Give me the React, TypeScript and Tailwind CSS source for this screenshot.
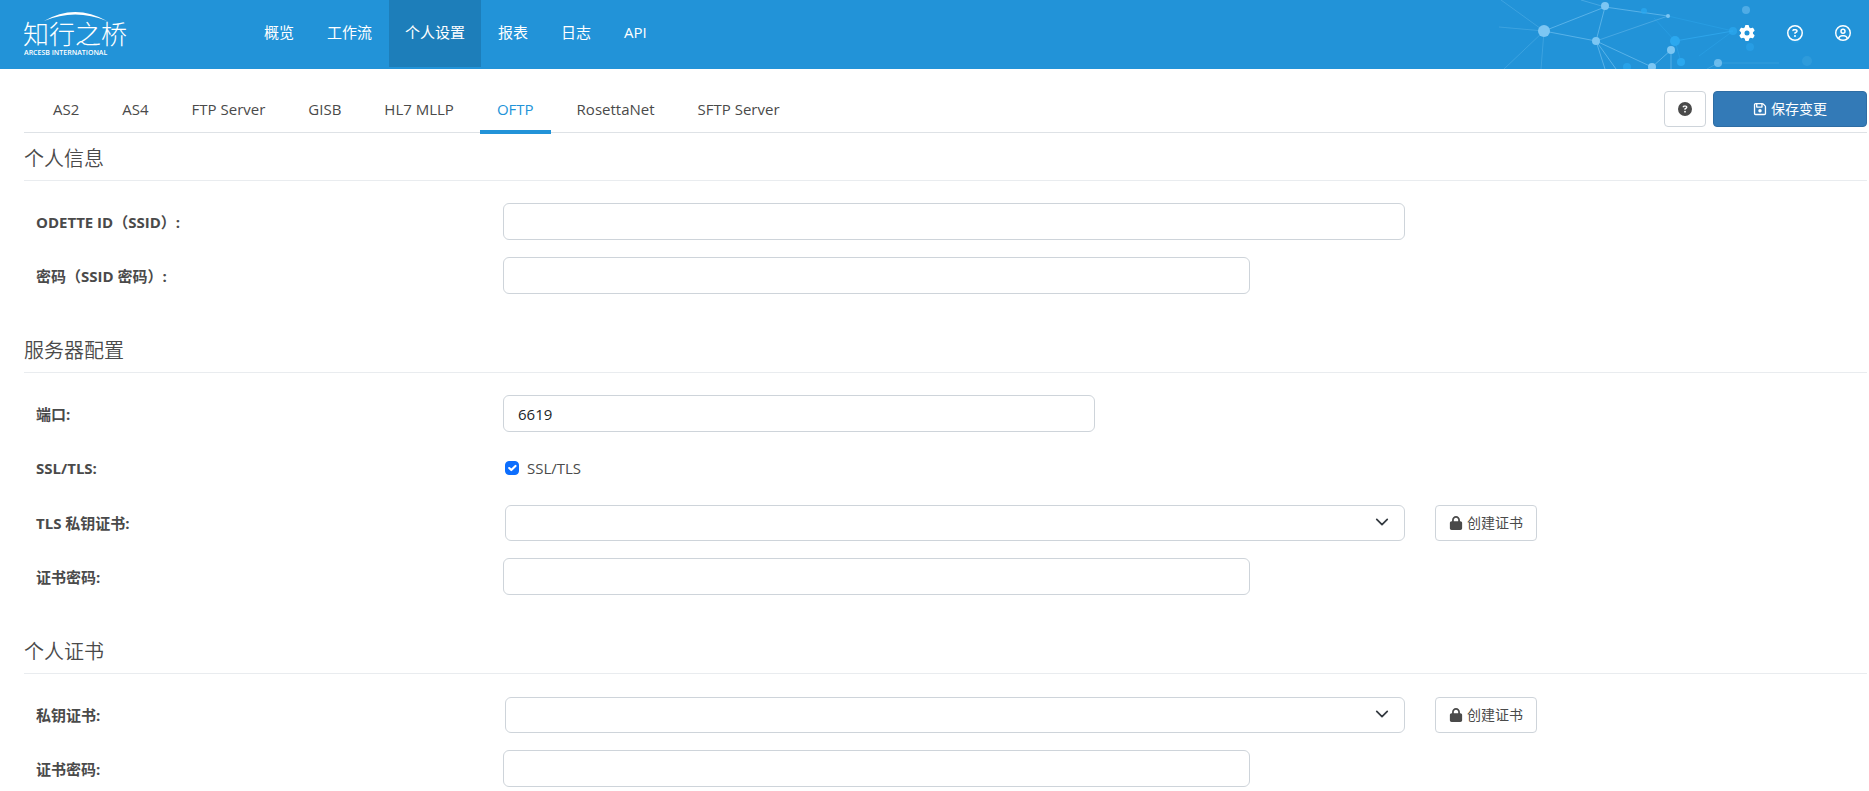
import { useId } from "react";
import type { ReactNode } from "react";
import {
  FaCircleQuestion,
  FaGear,
  FaLock,
  FaRegCircleQuestion,
  FaRegCircleUser,
  FaRegFloppyDisk,
} from "react-icons/fa6";

const navItems = ["概览", "工作流", "个人设置", "报表", "日志", "API"];
const tabs = ["AS2", "AS4", "FTP Server", "GISB", "HL7 MLLP", "OFTP", "RosettaNet", "SFTP Server"];

const control = "block rounded-md border border-[#ced4da] bg-white text-[15px] text-[#212529] outline-none focus:border-[#2293d8]";
const outlineButton =
  "flex h-9 items-center justify-center rounded-[4px] border border-[#ced4da] bg-white text-sm text-[#4a4a4a]";

function Logo() {
  return (
    <a href="#" aria-label="知行之桥" className="block w-[230px] shrink-0 pl-6 pt-3 text-white">
      <svg width="106" height="46" viewBox="0 0 106 46">
        <path d="M20 9 Q51 -9 83 9 Q51 -4 20 9 Z" fill="#fff" />
        <text x="-1" y="32" fontSize="26" fill="#fff" fontFamily="'Noto Sans CJK SC', sans-serif" fontWeight="300">
          知行之桥
        </text>
        <text x="0" y="43" fontSize="7" fill="#fff" fontFamily="'Open Sans', sans-serif" fontWeight="600">
          ARCESB INTERNATIONAL
        </text>
      </svg>
    </a>
  );
}

function Network() {
  return (
    <svg className="absolute right-0 top-0" width="420" height="69" viewBox="0 0 420 69" aria-hidden="true">
      <g stroke="#7cc6f3" strokeWidth="1" strokeOpacity="0.6" fill="none">
        <path d="M95 31L156 7L147 41L95 31M156 7L219 16M147 41L203 67L222 50V69M147 41L156 69M147 41L167 69" />
        <path d="M147 41L219 16M156 7L132 0" strokeOpacity="0.4" />
        <path d="M95 31L52 0M95 31L50 27M95 31L55 69M95 31L92 69M269 63L258 69" strokeOpacity="0.3" />
        <path d="M269 63H330" strokeOpacity="0.2" />
      </g>
      <path d="M226 41L284 31" stroke="#2fa9ef" strokeOpacity="0.8" fill="none" />
      <path d="M284 31L219 16M226 41L232 62M284 31L250 56M226 41L205 18" stroke="#2fa9ef" strokeOpacity="0.4" fill="none" />
      <g fill="#7cc6f3">
        <circle cx="95" cy="31" r="6" />
        <circle cx="156" cy="6" r="4" />
        <circle cx="147" cy="41" r="4" />
        <circle cx="219" cy="16" r="2" />
        <circle cx="222" cy="50" r="4" />
        <circle cx="203" cy="67" r="4" />
        <circle cx="269" cy="63" r="4" fillOpacity="0.8" />
        <circle cx="297" cy="10" r="4" fillOpacity="0.5" />
        <circle cx="358" cy="61" r="5" fillOpacity="0.15" />
      </g>
      <g fill="#2ba8ef">
        <circle cx="226" cy="41" r="5" />
        <circle cx="232" cy="62" r="4" />
        <circle cx="284" cy="31" r="4" fillOpacity="0.7" />
        <circle cx="195" cy="11" r="3" fillOpacity="0.8" />
        <circle cx="178" cy="67" r="4" fillOpacity="0.7" />
        <circle cx="301" cy="47" r="4" fillOpacity="0.5" />
        <circle cx="347" cy="39" r="4" fillOpacity="0.3" />
      </g>
    </svg>
  );
}

function Header() {
  return (
    <header className="relative flex h-[69px] items-start bg-[#2293d8]">
      <Network />
      <Logo />
      <nav className="ml-[18px] flex gap-px">
        {navItems.map((item) => (
          <a
            key={item}
            href="#"
            className={`flex h-[67px] items-center px-4 pb-[3px] text-[15px] text-white ${
              item === "API" ? "font-medium" : "font-normal"
            } ${item === "个人设置" ? "bg-[#1d7eba]" : ""}`}
          >
            {item}
          </a>
        ))}
      </nav>
      <div className="relative ml-auto flex h-[65px] items-center gap-8 pr-[18px] text-base text-white">
        <button type="button" aria-label="设置"><FaGear /></button>
        <button type="button" aria-label="帮助"><FaRegCircleQuestion /></button>
        <button type="button" aria-label="账户"><FaRegCircleUser /></button>
      </div>
    </header>
  );
}

function Section({ title, children }: { title: string; children: ReactNode }) {
  return (
    <section className="mb-[31px] last:mb-0">
      <h2 className="flex h-12 items-center border-b border-[#e9ecef] pt-[4px] text-xl font-[350]">{title}</h2>
      <div className="flex flex-col gap-[17px] pt-[22px]">{children}</div>
    </section>
  );
}

const row = "grid grid-cols-[479fr_902fr_462fr] items-center";
const label = "pl-3 text-[15px] font-bold leading-5";

function TextRow({ name, width, value, type = "text" }: { name: string; width: string; value?: string; type?: string }) {
  const id = useId();
  return (
    <div className={row}>
      <label htmlFor={id} className={label}>{name}</label>
      <input id={id} type={type} defaultValue={value} className={`${control} h-[37px] px-[14px] ${width}`} />
    </div>
  );
}

function CertRow({ name }: { name: string }) {
  const id = useId();
  return (
    <div className={`${row} h-[37px]`}>
      <label htmlFor={id} className={label}>{name}</label>
      <div className="relative pl-[2px]">
        <select id={id} className={`${control} h-9 w-full appearance-none px-[14px]`}>
          <option value=""></option>
        </select>
        <svg className="pointer-events-none absolute right-4 top-[10px]" width="14" height="14" viewBox="0 0 16 16" fill="none" stroke="#343a40" strokeWidth="2" strokeLinecap="round" strokeLinejoin="round" aria-hidden="true">
          <path d="M2 5l6 6 6-6" />
        </svg>
      </div>
      <div className="pl-[30px]">
        <button type="button" className={`${outlineButton} w-[102px] gap-1`}>
          <FaLock />
          创建证书
        </button>
      </div>
    </div>
  );
}

export default function App() {
  return (
    <div className="bg-white font-['Open_Sans','Noto_Sans_CJK_SC',sans-serif] text-[#4a4a4a]">
      <Header />
      <main className="pl-6 pr-[2px]">
        <div className="flex h-16 justify-between border-b border-[#dee2e6]">
          <nav className="flex gap-[9px] pl-3 pt-[17px]">
            {tabs.map((tab) => (
              <a
                key={tab}
                href="#"
                className={`flex h-12 items-center whitespace-nowrap border-b-4 px-[17px] pt-[2px] text-[15px] ${
                  tab === "OFTP" ? "border-[#2293d8] text-[#2293d8]" : "border-transparent"
                }`}
              >
                {tab}
              </a>
            ))}
          </nav>
          <div className="flex gap-[7px] pt-[22px]">
            <button type="button" aria-label="帮助" className={`${outlineButton} w-[42px]`}>
              <FaCircleQuestion />
            </button>
            <button type="button" className="flex h-9 w-[154px] items-center justify-center gap-1 rounded-[4px] border border-[#2e6da4] bg-[#337ab7] text-sm text-white">
              <FaRegFloppyDisk />
              保存变更
            </button>
          </div>
        </div>

        <Section title="个人信息">
          <TextRow name="ODETTE ID（SSID）:" width="w-full" />
          <TextRow name="密码（SSID 密码）:" width="w-[82.8%]" type="password" />
        </Section>

        <Section title="服务器配置">
          <TextRow name="端口:" width="w-[65.6%]" value="6619" />
          <div className={`${row} h-[38px]`}>
            <span className={label}>SSL/TLS:</span>
            <label className="flex items-center gap-2 pl-[2px] text-[15px] leading-5">
              <span className="relative flex">
                <input type="checkbox" defaultChecked className="peer size-[14px] appearance-none rounded-[4px] border border-[#ced4da] bg-white checked:border-[#0d6efd] checked:bg-[#0d6efd]" />
                <svg className="pointer-events-none absolute inset-0 hidden peer-checked:block" width="14" height="14" viewBox="0 0 20 20" fill="none" stroke="#fff" strokeWidth="3" strokeLinecap="round" strokeLinejoin="round" aria-hidden="true">
                  <path d="M6 10l3 3 6-6" />
                </svg>
              </span>
              SSL/TLS
            </label>
          </div>
          <CertRow name="TLS 私钥证书:" />
          <TextRow name="证书密码:" width="w-[82.8%]" type="password" />
        </Section>

        <Section title="个人证书">
          <CertRow name="私钥证书:" />
          <TextRow name="证书密码:" width="w-[82.8%]" type="password" />
        </Section>
      </main>
    </div>
  );
}
